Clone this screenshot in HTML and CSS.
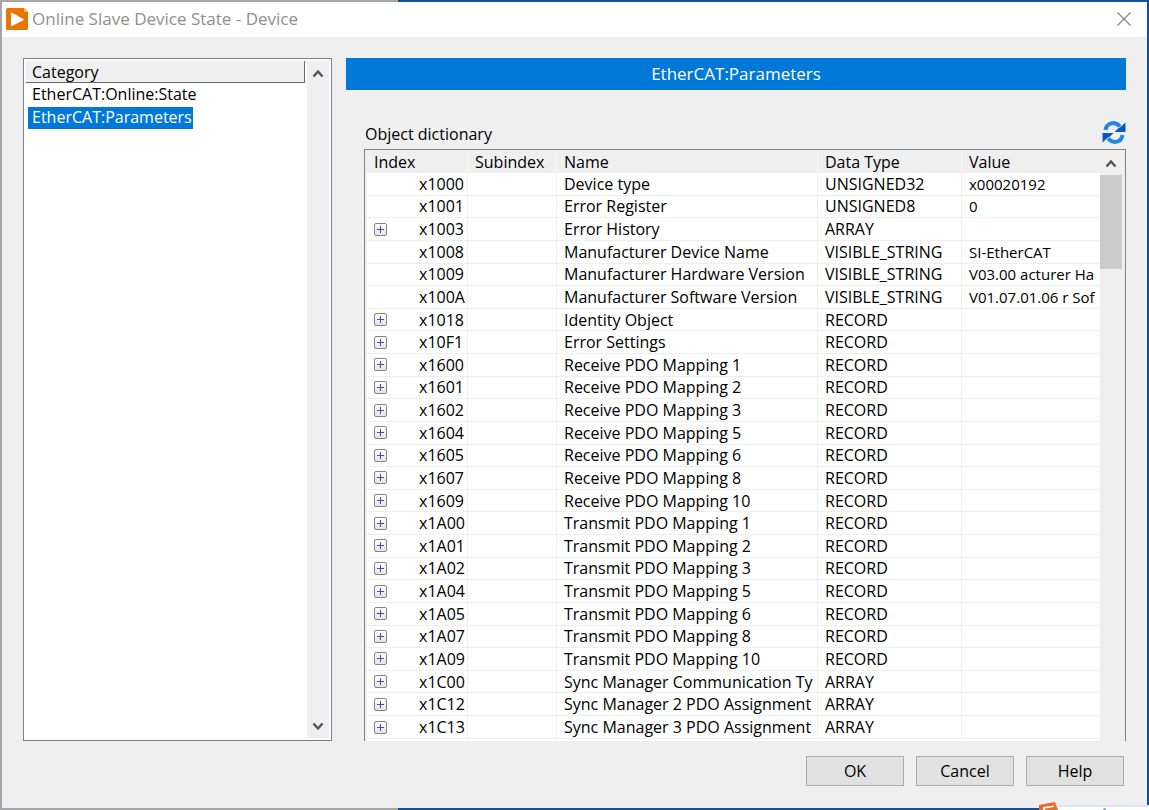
FILE: index.html
```html
<!DOCTYPE html>
<html lang="en">
<head>
    <meta charset="UTF-8">
    <meta name="viewport" content="width=device-width, initial-scale=1.0">
    <title>Online Slave Device State - Device</title>
    <link rel="stylesheet" href="styles.css">
</head>
<body>
    <div class="window">
        <header class="titlebar">
            <svg class="app-icon" viewBox="0 0 22 22" aria-hidden="true">
                <path d="M0 1.500Q0 0 1.500 0H18L22 4V20.500Q22 22 20.500 22H1.500Q0 22 0 20.500Z" fill="#e87605"/>
                <path d="M18 0L22 4H18Z" fill="#f3ad62"/>
                <path d="M5 5.500Q5 4.300 6 4.800L17.300 11Q18.300 11.700 17.300 12.300L6 18Q5 18.500 5 17.300Z" fill="#fff"/>
            </svg>
            <h1 class="title">Online Slave Device State - Device</h1>
            <button class="close" aria-label="Close">
                <svg viewBox="0 0 14 14"><path d="M0.500 0.500L13.500 13.500M13.500 0.500L0.500 13.500"/></svg>
            </button>
        </header>

        <main class="content">
            <!-- Category list -->
            <nav class="categories">
                <div class="category-list">
                    <h2 class="category-head">Category</h2>
                    <a href="#state" class="category">EtherCAT:Online:State</a>
                    <a href="#parameters" class="category active">EtherCAT:Parameters</a>
                </div>
                <div class="scrollbar">
                    <button class="arrow" aria-label="Scroll up"><svg viewBox="0 0 12 9"><path d="M1.500 7.500L6 2.500L10.500 7.500"/></svg></button>
                    <button class="arrow arrow-down" aria-label="Scroll down"><svg viewBox="0 0 12 9"><path d="M1.500 1.500L6 6.500L10.500 1.500"/></svg></button>
                </div>
            </nav>

            <!-- Object dictionary -->
            <section class="parameters" id="parameters">
                <h2 class="banner">EtherCAT:Parameters</h2>
                <div class="dictionary">
                    <div class="dictionary-head">
                        <h3 class="label" id="dictionary-label">Object dictionary</h3>
                        <button class="refresh" aria-label="Refresh">
                            <svg viewBox="0 0 24 24">
                                <path d="M3.500 10C4.500 3 12.500 0.500 18 6.500" fill="none" stroke="#2585e6" stroke-width="4"/>
                                <path d="M23.500 2.500V12H12.500L16 8.500L18 7.500Z" fill="#0b57c2"/>
                                <path d="M20.500 15C19.500 22 11.500 24.500 6 18.500" fill="none" stroke="#2585e6" stroke-width="4"/>
                                <path d="M0.500 22.500V13H11.500L8 16.500L6 17.500Z" fill="#0b57c2"/>
                            </svg>
                        </button>
                    </div>
                    <div class="grid-box">
                        <div class="grid-view">
                            <table class="grid" aria-labelledby="dictionary-label">
                                <colgroup>
                                    <col class="col-toggle">
                                    <col class="col-index">
                                    <col class="col-sub">
                                    <col class="col-name">
                                    <col class="col-type">
                                    <col class="col-value">
                                </colgroup>
                                <thead>
                                    <tr><th colspan="2">Index</th><th>Subindex</th><th>Name</th><th>Data Type</th><th>Value</th></tr>
                                </thead>
                                <tbody>
                                    <tr><td></td><td>x1000</td><td></td><td>Device type</td><td>UNSIGNED32</td><td>x00020192</td></tr>
                                    <tr><td></td><td>x1001</td><td></td><td>Error Register</td><td>UNSIGNED8</td><td>0</td></tr>
                                    <tr><td><button class="expand" aria-label="Expand x1003"></button></td><td>x1003</td><td></td><td>Error History</td><td>ARRAY</td><td></td></tr>
                                    <tr><td></td><td>x1008</td><td></td><td>Manufacturer Device Name</td><td>VISIBLE_STRING</td><td>SI-EtherCAT</td></tr>
                                    <tr><td></td><td>x1009</td><td></td><td>Manufacturer Hardware Version</td><td>VISIBLE_STRING</td><td>V03.00 acturer Ha</td></tr>
                                    <tr><td></td><td>x100A</td><td></td><td>Manufacturer Software Version</td><td>VISIBLE_STRING</td><td>V01.07.01.06 r Sof</td></tr>
                                    <tr><td><button class="expand" aria-label="Expand x1018"></button></td><td>x1018</td><td></td><td>Identity Object</td><td>RECORD</td><td></td></tr>
                                    <tr><td><button class="expand" aria-label="Expand x10F1"></button></td><td>x10F1</td><td></td><td>Error Settings</td><td>RECORD</td><td></td></tr>
                                    <tr><td><button class="expand" aria-label="Expand x1600"></button></td><td>x1600</td><td></td><td>Receive PDO Mapping 1</td><td>RECORD</td><td></td></tr>
                                    <tr><td><button class="expand" aria-label="Expand x1601"></button></td><td>x1601</td><td></td><td>Receive PDO Mapping 2</td><td>RECORD</td><td></td></tr>
                                    <tr><td><button class="expand" aria-label="Expand x1602"></button></td><td>x1602</td><td></td><td>Receive PDO Mapping 3</td><td>RECORD</td><td></td></tr>
                                    <tr><td><button class="expand" aria-label="Expand x1604"></button></td><td>x1604</td><td></td><td>Receive PDO Mapping 5</td><td>RECORD</td><td></td></tr>
                                    <tr><td><button class="expand" aria-label="Expand x1605"></button></td><td>x1605</td><td></td><td>Receive PDO Mapping 6</td><td>RECORD</td><td></td></tr>
                                    <tr><td><button class="expand" aria-label="Expand x1607"></button></td><td>x1607</td><td></td><td>Receive PDO Mapping 8</td><td>RECORD</td><td></td></tr>
                                    <tr><td><button class="expand" aria-label="Expand x1609"></button></td><td>x1609</td><td></td><td>Receive PDO Mapping 10</td><td>RECORD</td><td></td></tr>
                                    <tr><td><button class="expand" aria-label="Expand x1A00"></button></td><td>x1A00</td><td></td><td>Transmit PDO Mapping 1</td><td>RECORD</td><td></td></tr>
                                    <tr><td><button class="expand" aria-label="Expand x1A01"></button></td><td>x1A01</td><td></td><td>Transmit PDO Mapping 2</td><td>RECORD</td><td></td></tr>
                                    <tr><td><button class="expand" aria-label="Expand x1A02"></button></td><td>x1A02</td><td></td><td>Transmit PDO Mapping 3</td><td>RECORD</td><td></td></tr>
                                    <tr><td><button class="expand" aria-label="Expand x1A04"></button></td><td>x1A04</td><td></td><td>Transmit PDO Mapping 5</td><td>RECORD</td><td></td></tr>
                                    <tr><td><button class="expand" aria-label="Expand x1A05"></button></td><td>x1A05</td><td></td><td>Transmit PDO Mapping 6</td><td>RECORD</td><td></td></tr>
                                    <tr><td><button class="expand" aria-label="Expand x1A07"></button></td><td>x1A07</td><td></td><td>Transmit PDO Mapping 8</td><td>RECORD</td><td></td></tr>
                                    <tr><td><button class="expand" aria-label="Expand x1A09"></button></td><td>x1A09</td><td></td><td>Transmit PDO Mapping 10</td><td>RECORD</td><td></td></tr>
                                    <tr><td><button class="expand" aria-label="Expand x1C00"></button></td><td>x1C00</td><td></td><td>Sync Manager Communication Ty</td><td>ARRAY</td><td></td></tr>
                                    <tr><td><button class="expand" aria-label="Expand x1C12"></button></td><td>x1C12</td><td></td><td>Sync Manager 2 PDO Assignment</td><td>ARRAY</td><td></td></tr>
                                    <tr><td><button class="expand" aria-label="Expand x1C13"></button></td><td>x1C13</td><td></td><td>Sync Manager 3 PDO Assignment</td><td>ARRAY</td><td></td></tr>
                                </tbody>
                            </table>
                        </div>
                        <div class="scrollbar">
                            <button class="arrow" aria-label="Scroll up"><svg viewBox="0 0 12 9"><path d="M1.500 7.500L6 2.500L10.500 7.500"/></svg></button>
                            <div class="thumb"></div>
                        </div>
                    </div>
                </div>
            </section>
        </main>

        <footer class="actions">
            <button class="btn">OK</button>
            <button class="btn">Cancel</button>
            <button class="btn">Help</button>
        </footer>
    </div>

    <!-- Tray popup peeking over the bottom edge -->
    <svg class="tray" viewBox="0 0 112 8" aria-hidden="true">
        <path d="M20 3H112V8H20Z" fill="#dce8f6"/>
        <path d="M20 5H112V8H20Z" fill="#fff"/>
        <path d="M2 3L18 0L21 8H2Z" fill="#f4652f"/>
        <path d="M6 5L17 3.500L17 5L8 6.500V8H6Z" fill="#fff"/>
        <path d="M66 7.500L68 6L69 8H66Z" fill="#4b80c4"/>
    </svg>
</body>
</html>
```

FILE: styles.css
```css
* {
    box-sizing: border-box;
}

/* Desktop strip visible round the window */
body {
    margin: 0;
    height: 100vh;
    min-height: 600px;
    padding: 2px;
    position: relative;
    overflow: hidden;
    display: flex;
    background: linear-gradient(90deg, #a6a6a8 398px, #14509b 398px);
    color: #000;
    font-family: "Open Sans", "Noto Sans", sans-serif;
    font-size: 16px;
    line-height: 20px;
}

h1,
h2,
h3 {
    margin: 0;
    font-size: 16px;
    font-weight: 400;
}

button {
    padding: 0;
    border: 0;
    background: none;
    font: inherit;
    color: inherit;
}

.window {
    flex: 1;
    min-width: 0;
    display: flex;
    flex-direction: column;
    background: #efefef;
}

/* Title bar */
.titlebar {
    flex: none;
    height: 35px;
    padding: 0 16px 2px 4px;
    display: flex;
    align-items: center;
    gap: 4px;
    background: #fff;
}

.app-icon {
    width: 22px;
    height: 22px;
}

.title {
    flex: 1;
    color: #8f8f8f;
    font-size: 17px;
}

.close {
    width: 14px;
    height: 14px;
}

.close svg {
    display: block;
    stroke: #868686;
    stroke-width: 1.2;
}

/* Two columns */
.content {
    flex: 1;
    min-height: 0;
    padding: 21px 21px 0;
    display: grid;
    grid-template-columns: 309px 1fr;
    gap: 14px;
}

.categories {
    padding: 2px;
    display: flex;
    background: #fff;
    border: 1px solid #7c828a;
}

.category-list {
    flex: 1;
    display: flex;
    flex-direction: column;
    align-items: flex-start;
}

.category-head {
    width: 279px;
    height: 22px;
    padding-left: 6px;
    line-height: 22px;
    background: #efefef;
    border-right: 1px solid #696969;
    border-bottom: 1px solid #696969;
}

.category {
    height: 22px;
    margin: 1px 0 0 2px;
    padding: 0 1px 0 4px;
    color: #000;
    text-decoration: none;
}

.category.active {
    background: #0078d7;
    color: #fff;
}

/* Scrollbars */
.scrollbar {
    flex: none;
    width: 22px;
    display: flex;
    flex-direction: column;
    background: #efefef;
}

.arrow {
    height: 24px;
    display: flex;
    align-items: center;
    justify-content: center;
}

.arrow svg {
    width: 12px;
    height: 9px;
    fill: none;
    stroke: #555;
    stroke-width: 2.5;
}

.arrow-down {
    margin-top: auto;
}

.thumb {
    height: 94px;
    background: #cbcbcb;
}

/* Parameters page */
.parameters {
    min-width: 0;
    min-height: 0;
    display: flex;
    flex-direction: column;
}

.banner {
    height: 32px;
    line-height: 32px;
    background: #0078d7;
    color: #fff;
    font-size: 17px;
    text-align: center;
}

.dictionary {
    flex: 1;
    min-height: 0;
    padding: 30px 0 0 18px;
    display: flex;
    flex-direction: column;
}

.dictionary-head {
    height: 29px;
    padding-left: 1px;
    display: flex;
    justify-content: space-between;
}

.label {
    line-height: 28px;
}

.refresh,
.refresh svg {
    display: block;
    width: 24px;
    height: 24px;
}

.grid-box {
    flex: 1;
    min-height: 0;
    padding: 1px 3px 0 2px;
    display: flex;
    border: 1px solid #7c828a;
    border-bottom: 0;
}

.grid-view {
    flex: 1;
    min-width: 0;
    padding-bottom: 2px;
    overflow: hidden;
    background: #fff;
}

.grid {
    width: 100%;
    height: 100%;
    table-layout: fixed;
    border-collapse: separate;
    border-spacing: 0;
}

.col-toggle { width: 45px; }
.col-index { width: 56px; }
.col-sub { width: 89px; }
.col-type { width: 144px; }
.col-value { width: 138px; }

th,
td {
    padding: 0 0 0 7px;
    overflow: hidden;
    white-space: nowrap;
    text-align: left;
    font-weight: 400;
    border-right: 1px solid #efefef;
}

th {
    height: 22px;
    background: #efefef;
    border-right-color: #f8f8f8;
}

td {
    border-bottom: 1px solid #efefef;
}

td:last-child {
    font-size: 15px;
}

td:first-child,
td:last-child,
th:last-child {
    border-right: 0;
}

/* Tree node toggle */
.expand {
    display: block;
    width: 13px;
    height: 13px;
    border: 1px solid #858585;
    border-radius: 2px;
    background:
        linear-gradient(#3a57a5, #3a57a5) center / 7px 1px no-repeat,
        linear-gradient(#3a57a5, #3a57a5) center / 1px 7px no-repeat,
        linear-gradient(#fff, #e4e4e4);
}

/* Bottom buttons */
.actions {
    flex: none;
    padding: 15px 23px 22px;
    display: flex;
    justify-content: flex-end;
    gap: 12px;
}

.btn {
    width: 98px;
    height: 30px;
    background: #e1e1e1;
    border: 1px solid #adadad;
}

.tray {
    position: absolute;
    right: 0;
    bottom: 0;
    width: 112px;
    height: 8px;
}
```
